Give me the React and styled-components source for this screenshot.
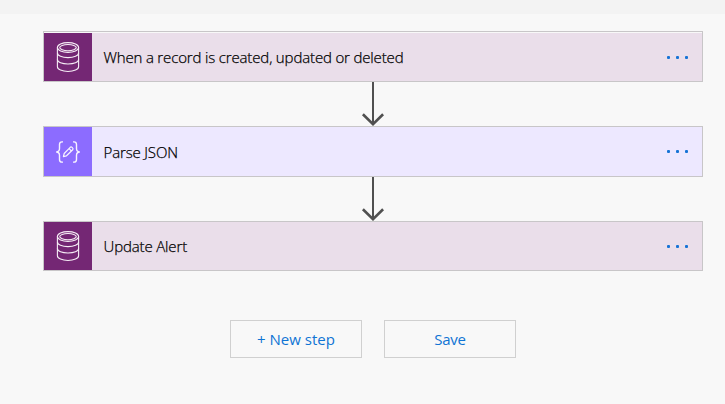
import React from 'react';
import styled, { createGlobalStyle } from 'styled-components';

const GlobalStyle = createGlobalStyle`
  * { box-sizing: border-box; }
  body {
    margin: 0;
    background: #f8f8f8;
    font-family: "Open Sans", "Noto Sans", sans-serif;
    overflow: hidden;
  }
`;

const Page = styled.div`
  height: 404px;
  background: #f8f8f8;
`;

const TopBar = styled.div`
  height: 14px;
  background: #f3f3f3;
`;

const Flow = styled.main`
  display: flex;
  flex-direction: column;
  width: 660px;
  margin: 17px 0 0 43px;
`;

const Card = styled.section`
  display: flex;
  align-items: stretch;
  height: ${(p) => p.$height}px;
  border: 1px solid #c8c6c8;
  padding-top: ${(p) => (p.$gap ? 1 : 0)}px;
  background: ${(p) => p.$tint};
  background-clip: content-box;
`;

const IconTile = styled.div`
  display: flex;
  align-items: center;
  justify-content: center;
  width: 48px;
  background: ${(p) => p.$color};
`;

const Title = styled.span`
  flex: 1;
  align-self: center;
  padding: 0 0 0 11.5px;
  font-size: 15px;
  font-weight: 300;
  line-height: 20px;
  letter-spacing: -0.12px;
  word-spacing: -0.2px;
  white-space: nowrap;
  color: #000;
  -webkit-text-stroke: 0.25px #000;
`;

const MenuButton = styled.button`
  display: flex;
  align-items: center;
  gap: 6px;
  margin: 0;
  padding: 0 14px 0 10px;
  border: 0;
  background: none;
`;

const Dot = styled.i`
  width: 3px;
  height: 3px;
  border-radius: 1px;
  background: #1673d6;
`;

const Connector = styled.svg`
  display: block;
  width: 24px;
  height: 44px;
  margin-left: 318px;
  fill: none;
  stroke: #505050;
  stroke-width: 2;
`;

const Actions = styled.div`
  display: flex;
  gap: 22px;
  margin: 49px 0 0 187px;
`;

const ActionButton = styled.button`
  width: 132px;
  height: 38px;
  padding: 0 0 1px;
  border: 1px solid #d0d0d0;
  background: #f8f8f8;
  color: #0f74d4;
  font: 400 15px/20px "Open Sans", "Noto Sans", sans-serif;
  letter-spacing: ${(p) => p.$tracking || 0}px;
`;

function DatabaseIcon() {
  return (
    <svg width="24" height="32" viewBox="0 0 24 32" fill="none" stroke="#f6eef6" strokeWidth="1.1">
      <ellipse cx="12" cy="6.5" rx="10.6" ry="4.9" />
      <ellipse cx="12" cy="6.6" rx="8.3" ry="3.1" />
      <path d="M1.4 6.5V25.7C1.4 28.4 6.1 30.5 12 30.5S22.6 28.4 22.6 25.7V6.5" />
      <path d="M1.4 12C1.4 14.7 6.1 16.6 12 16.6S22.6 14.7 22.6 12" />
      <path d="M1.4 18.6C1.4 21.3 6.1 23 12 23S22.6 21.3 22.6 18.6" />
    </svg>
  );
}

function BracesIcon() {
  return (
    <svg width="26" height="24" viewBox="0 0 26 24" fill="none" stroke="#f7f3ff" strokeWidth="1.4">
      <path d="M8 1.9H7C5.2 1.9 4.5 2.8 4.5 4.6V8.6C4.5 10.8 3.5 11.9 1.2 12C3.5 12.1 4.5 13.2 4.5 15.4V19.4C4.5 21.2 5.2 22.1 7 22.1H8" />
      <path d="M18 1.9H19C20.8 1.9 21.5 2.8 21.5 4.6V8.6C21.5 10.8 22.5 11.9 24.8 12C22.5 12.1 21.5 13.2 21.5 15.4V19.4C21.5 21.2 20.8 22.1 19 22.1H18" />
      <path strokeWidth="1.2" strokeLinejoin="round" d="M8.4 16.6L9.2 13.5L15.2 7.3C16.5 6.1 18.9 8.5 17.7 9.8L11.5 15.8ZM14.1 8.6L16.4 11" />
    </svg>
  );
}

function Arrow() {
  return (
    <Connector viewBox="0 0 24 44">
      <path d="M12 0V42.5" />
      <path strokeWidth="2.6" d="M1.9 32.3L12 42.2L22.1 32.3" />
    </Connector>
  );
}

function Step({ icon, title, height = 51, color, tint, gap }) {
  return (
    <Card $height={height} $tint={tint} $gap={gap}>
      <IconTile $color={color}>{icon}</IconTile>
      <Title>{title}</Title>
      <MenuButton aria-label="More options">
        <Dot />
        <Dot />
        <Dot />
      </MenuButton>
    </Card>
  );
}

export default function App() {
  return (
    <Page>
      <GlobalStyle />
      <TopBar />
      <Flow>
        <Step icon={<DatabaseIcon />} title="When a record is created, updated or deleted" color="#742774" tint="#eadeea" gap />
        <Arrow />
        <Step icon={<BracesIcon />} title="Parse JSON" color="#8c6cff" tint="#ede8ff" />
        <Arrow />
        <Step icon={<DatabaseIcon />} title="Update Alert" height={50} color="#742774" tint="#eadeea" />
        <Actions>
          <ActionButton>+ New step</ActionButton>
          <ActionButton $tracking={-0.2}>Save</ActionButton>
        </Actions>
      </Flow>
    </Page>
  );
}
